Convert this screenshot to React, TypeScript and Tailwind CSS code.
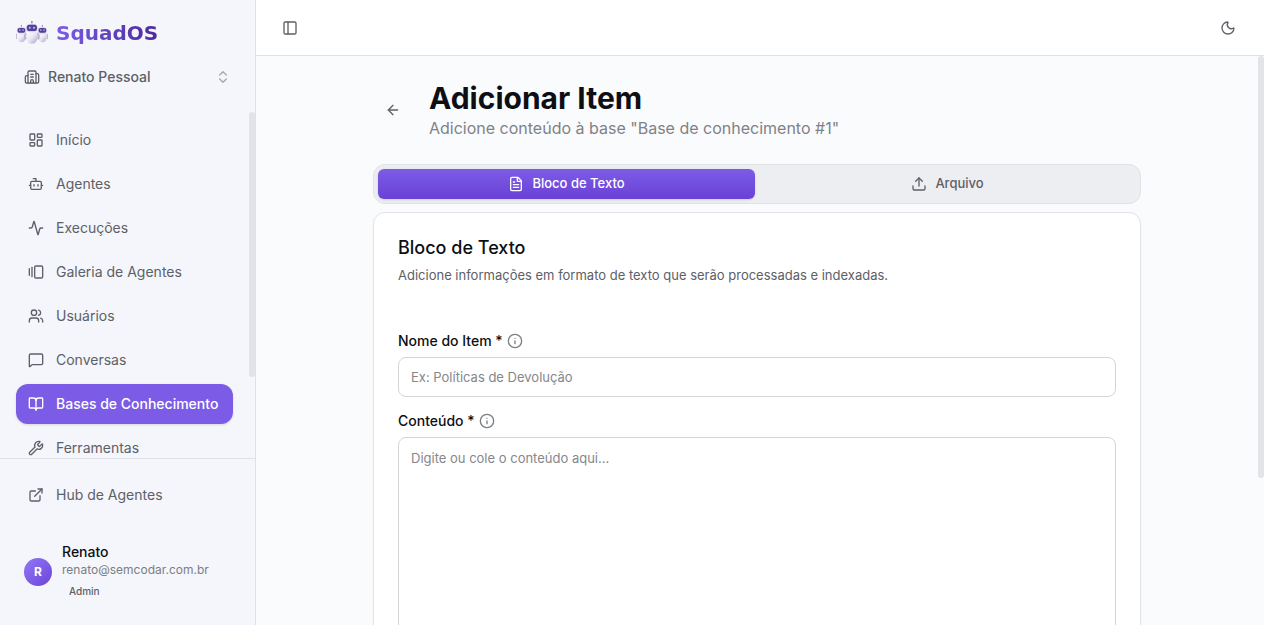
import React, { useState } from "react";
import {
  Activity,
  ArrowLeft,
  BookOpen,
  Bot,
  Building2,
  ChevronsUpDown,
  ExternalLink,
  FileText,
  GalleryHorizontalEnd,
  Info,
  LayoutDashboard,
  MessageSquare,
  Moon,
  PanelLeft,
  Upload,
  Users,
  Wrench,
} from "lucide-react";

const navItems = [
  { label: "Início", icon: LayoutDashboard },
  { label: "Agentes", icon: Bot },
  { label: "Execuções", icon: Activity },
  { label: "Galeria de Agentes", icon: GalleryHorizontalEnd },
  { label: "Usuários", icon: Users },
  { label: "Conversas", icon: MessageSquare },
  { label: "Bases de Conhecimento", icon: BookOpen, active: true },
  { label: "Ferramentas", icon: Wrench },
];

function Robot() {
  return (
    <>
      <path d="M10 0v5" stroke="#a59cc0" strokeWidth="1" />
      <circle cx="10" cy="1" r="1" fill="#8c7fa8" />
      <path d="M3.500 14c-2 2-2.500 5-1 8M16.500 14c2 2 2.500 5 1 8" stroke="#b9b4cc" strokeWidth="2" fill="none" />
      <path d="M4 13h12c2 7 0 14-6 14S2 20 4 13z" fill="url(#robot-body)" />
      <rect x="3" y="3.500" width="14" height="10" rx="4.500" fill="#d9d5e8" />
      <rect x="4" y="4.500" width="12" height="7.500" rx="3" fill="#54409a" />
      <circle cx="7.500" cy="8" r="1.300" fill="#c3b4f5" />
      <circle cx="12.500" cy="8" r="1.300" fill="#c3b4f5" />
    </>
  );
}

function Logo() {
  return (
    <svg width="32" height="32" viewBox="0 0 32 32" fill="none" aria-hidden="true">
      <defs>
        <linearGradient id="robot-body" x1="0" y1="0" x2="1" y2="1">
          <stop offset="0" stopColor="#ffffff" />
          <stop offset="0.5" stopColor="#e9e6f3" />
          <stop offset="1" stopColor="#a9a1c4" />
        </linearGradient>
      </defs>
      <g transform="translate(-1 8) scale(0.64)">
        <Robot />
      </g>
      <g transform="translate(20 8) scale(0.64)">
        <Robot />
      </g>
      <g transform="translate(7.500 4) scale(0.84)">
        <Robot />
      </g>
    </svg>
  );
}

function Sidebar() {
  return (
    <aside className="flex w-64 shrink-0 flex-col border-r border-[#dfe1e6] bg-[#f4f6fb]">
      <div className="flex items-center gap-2 px-4 pt-[17px]">
        <Logo />
        <span className="bg-gradient-to-r from-[#7c5ce6] to-[#4c2a9c] bg-clip-text font-['DejaVu_Sans',sans-serif] text-xl leading-8 font-bold text-transparent">
          SquadOS
        </span>
      </div>

      <button className="mt-2 flex h-10 shrink-0 items-center gap-2 px-6 text-sm font-medium text-[#5d6066]">
        <Building2 className="size-4" />
        Renato Pessoal
        <ChevronsUpDown className="ml-auto size-4 text-[#a5a7ab]" />
      </button>

      <div className="relative mt-[15px] min-h-0 flex-1">
        <nav className="h-full overflow-hidden pt-2 pr-[22px] pl-4">
          <ul className="flex flex-col gap-1">
            {navItems.map(({ label, icon: Icon, active }) => (
              <li key={label}>
                <a
                  href="#"
                  className={
                    active
                      ? "flex h-10 items-center gap-3 rounded-xl bg-[#7c5ce6] px-3 text-sm font-medium whitespace-nowrap text-white shadow-sm"
                      : "flex h-10 items-center gap-3 rounded-xl px-3 text-sm whitespace-nowrap text-[#5d6066]"
                  }
                >
                  <Icon className="size-4 shrink-0" />
                  {label}
                </a>
              </li>
            ))}
          </ul>
        </nav>
        <div className="absolute top-0 right-0 h-[265px] w-1.5 rounded-full bg-[#e1e3e8]" />
      </div>

      <div className="border-t border-[#dfe1e6] px-4 pt-4 pb-6">
        <a href="#" className="flex h-10 items-center gap-3 px-3 text-sm text-[#5d6066]">
          <ExternalLink className="size-4" />
          Hub de Agentes
        </a>
        <div className="mt-[27px] flex items-center gap-2.5 px-2">
          <div className="flex size-7 items-center justify-center rounded-full bg-gradient-to-br from-[#9377f5] to-[#6d43d8] text-xs font-bold text-white">
            R
          </div>
          <div className="flex flex-col">
            <span className="text-sm leading-5 font-medium text-[#0d0f14]">Renato</span>
            <span className="text-xs leading-4 text-[#7b7e84]">renato@semcodar.com.br</span>
            <span className="mt-[3px] px-[7px] text-[10px] leading-5 font-medium text-[#5d6066]">
              Admin
            </span>
          </div>
        </div>
      </div>
    </aside>
  );
}

function FieldLabel({ htmlFor, children }: { htmlFor: string; children: React.ReactNode }) {
  return (
    <div className="flex items-center gap-1">
      <label htmlFor={htmlFor} className="text-sm leading-4 font-medium text-[#0d0f14]">
        {children}
      </label>
      <Info className="size-4 text-[#7b7e84]" />
    </div>
  );
}

export default function App() {
  const [tab, setTab] = useState("texto");

  const tabClass = (value: string) =>
    tab === value
      ? "flex h-[30px] items-center justify-center gap-2 rounded-md bg-gradient-to-b from-[#7c5ce6] to-[#6a40d6] text-[13px] font-medium text-white shadow-sm"
      : "flex h-[30px] items-center justify-center gap-2 rounded-md text-[13px] font-medium text-[#5d6066]";

  return (
    <div className="flex h-screen overflow-hidden bg-[#fafbfd] font-[Inter,sans-serif]">
      <Sidebar />

      <div className="flex min-w-0 flex-1 flex-col">
        <header className="flex h-14 shrink-0 items-center justify-between border-b border-[#dfe1e6] bg-white px-7 text-[#5d6066]">
          <button aria-label="Alternar menu" className="-ml-0.5">
            <PanelLeft className="size-4" />
          </button>
          <button aria-label="Alternar tema">
            <Moon className="size-4" />
          </button>
        </header>

        <div className="relative min-h-0 flex-1">
          <main className="h-full overflow-hidden pt-6 pr-1.5">
            <div className="mx-auto max-w-3xl">
              <div className="flex items-center gap-4">
                <button
                  aria-label="Voltar"
                  className="flex size-10 items-center justify-center text-[#5d6066]"
                >
                  <ArrowLeft className="size-4" />
                </button>
                <div>
                  <h1 className="text-3xl leading-9 font-bold text-[#0d0f14]">Adicionar Item</h1>
                  <p className="text-base leading-6 text-[#7f8287]">
                    Adicione conteúdo à base "Base de conhecimento #1"
                  </p>
                </div>
              </div>

              <div
                role="tablist"
                className="mt-6 grid grid-cols-2 gap-1 rounded-xl border border-[#e0e2e6] bg-[#edeef2] p-1"
              >
                <button
                  role="tab"
                  aria-selected={tab === "texto"}
                  className={tabClass("texto")}
                  onClick={() => setTab("texto")}
                >
                  <FileText className="size-4" />
                  Bloco de Texto
                </button>
                <button
                  role="tab"
                  aria-selected={tab === "arquivo"}
                  className={tabClass("arquivo")}
                  onClick={() => setTab("arquivo")}
                >
                  <Upload className="size-4" />
                  Arquivo
                </button>
              </div>

              <section className="mt-2 rounded-xl border border-[#e2e4e8] bg-white p-6 shadow-xs">
                <h2 className="text-lg leading-[22px] font-medium text-[#0d0f14]">
                  Bloco de Texto
                </h2>
                <p className="mt-1.5 text-[13px] leading-5 text-[#5d6066]">
                  Adicione informações em formato de texto que serão processadas e indexadas.
                </p>

                <form className="mt-12 flex flex-col gap-4">
                  <div className="flex flex-col gap-2">
                    <FieldLabel htmlFor="nome">Nome do Item *</FieldLabel>
                    <input
                      id="nome"
                      type="text"
                      placeholder="Ex: Políticas de Devolução"
                      className="h-10 w-full rounded-lg border border-[#d4d5d8] bg-white px-3 text-[13px] placeholder:text-[#85878b]"
                    />
                  </div>
                  <div className="flex flex-col gap-2">
                    <FieldLabel htmlFor="conteudo">Conteúdo *</FieldLabel>
                    <textarea
                      id="conteudo"
                      rows={15}
                      placeholder="Digite ou cole o conteúdo aqui..."
                      className="w-full resize-none rounded-lg border border-[#d4d5d8] bg-white px-3 py-2.5 text-[13px] leading-5 placeholder:text-[#85878b]"
                    />
                  </div>
                </form>
              </section>
            </div>
          </main>
          <div className="absolute top-0 right-0 h-[422px] w-1.5 rounded-full bg-[#e3e4e7]" />
        </div>
      </div>
    </div>
  );
}
